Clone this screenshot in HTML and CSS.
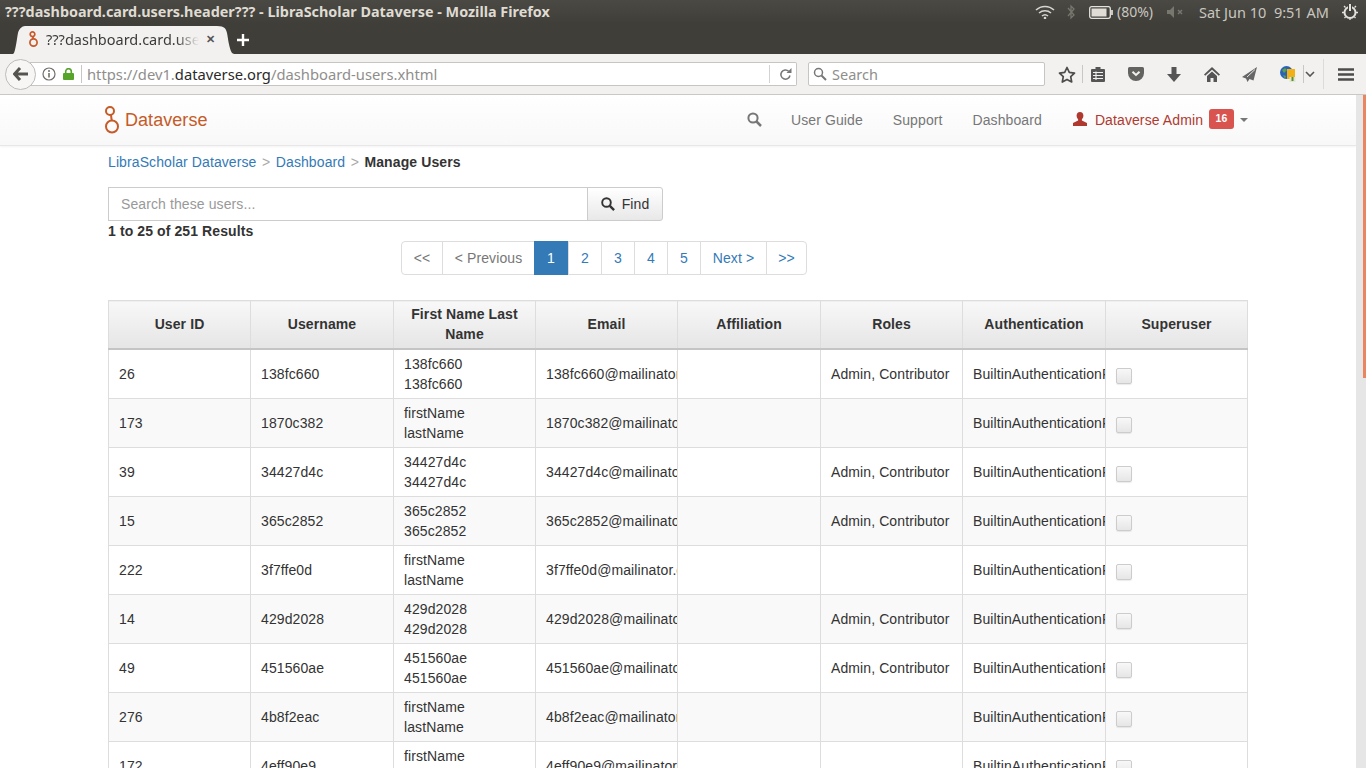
FILE: index.html
```html
<!DOCTYPE html>
<html lang="en">
<head>
<meta charset="utf-8">
<title>Manage Users</title>
<link rel="stylesheet" href="styles.css">
</head>
<body>
<div class="titlebar">
  <div class="wintitle">???dashboard.card.users.header??? - LibraScholar Dataverse - Mozilla Firefox</div>
  <div class="tray">
    <svg class="t-wifi" width="20" height="14" viewBox="0 0 20 14"><g fill="none" stroke="#d8d6cf" stroke-width="1.5"><path d="M1 5a13 13 0 0 1 18 0"/><path d="M4 8a9 9 0 0 1 12 0"/><path d="M7 11a4.500 4.500 0 0 1 6 0"/></g><circle cx="10" cy="13" r="1.300" fill="#d8d6cf"/></svg>
    <svg class="t-bt" width="8" height="16" viewBox="0 0 8 16"><path d="M1 4l6 7-3 3V2l3 3-6 7" fill="none" stroke="#77766f" stroke-width="1.300"/></svg>
    <svg class="t-bat" width="24" height="13" viewBox="0 0 24 13"><rect x=".7" y=".7" width="20.600" height="11.600" rx="2" fill="none" stroke="#e4e2dc" stroke-width="1.300"/><rect x="2.500" y="2.500" width="15" height="8" fill="#dfddd6"/><rect x="22" y="4" width="2" height="5" fill="#c9c7c0"/></svg>
    <span class="t-text t-pct">(80%)</span>
    <svg class="t-mute" width="17" height="12" viewBox="0 0 17 12"><path d="M0 4h3l4-4v12l-4-4H0z" fill="#77766f"/><path d="M11 4l4 4m0-4l-4 4" stroke="#77766f" stroke-width="1.500"/></svg>
    <span class="t-text t-date">Sat Jun 10&nbsp; 9:51 AM</span>
    <svg class="t-power" width="16" height="16" viewBox="0 0 16 16"><circle cx="8" cy="8.500" r="5.500" fill="none" stroke="#e4e2dc" stroke-width="2"/><path d="M8 0v8" stroke="#3f3e39" stroke-width="4"/><path d="M8 0v7" stroke="#e4e2dc" stroke-width="2"/><path d="M2 2l1.500 1.500M14 2l-1.500 1.500M0 8.500h2M14 8.500h2M8 15v1M2.500 14l1-1M13.500 14l-1-1" stroke="#e4e2dc" stroke-width="1.300"/></svg>
  </div>
</div>
<div class="tabstrip">
  <div class="tab">
    <svg class="tabicon" width="11" height="16" viewBox="0 0 11 16"><g fill="none" stroke="#c9592a" stroke-width="1.700"><circle cx="4.500" cy="3.200" r="2.300"/><circle cx="5.500" cy="11.500" r="3.600"/><path d="M4.800 5.500l.5 2.500"/></g></svg>
    <span class="tabtext">???dashboard.card.use</span>
    <span class="tabclose">✕</span>
  </div>
  <svg class="newtab" width="14" height="14" viewBox="0 0 14 14"><path d="M7 1v12M1 7h12" stroke="#fff" stroke-width="2.400"/></svg>
</div>
<div class="navrow">
  <div class="backbtn"><svg width="16" height="14" viewBox="0 0 16 14"><path d="M7 1L1.500 7 7 13M2 7h13" fill="none" stroke="#55544f" stroke-width="3"/></svg></div>
  <div class="urlbar">
    <svg class="u-info" width="14" height="14" viewBox="0 0 14 14"><circle cx="7" cy="7" r="6" fill="none" stroke="#6f6e6a" stroke-width="1.200"/><path d="M7 6v4.500" stroke="#6f6e6a" stroke-width="1.600"/><circle cx="7" cy="3.900" r="1" fill="#6f6e6a"/></svg>
    <svg class="u-lock" width="11" height="12" viewBox="0 0 11 12"><rect y="5" width="11" height="7" rx="1" fill="#57a42b"/><path d="M2.700 5.500V3.500a2.800 2.800 0 0 1 5.600 0v2" fill="none" stroke="#57a42b" stroke-width="1.600"/></svg>
    <span class="u-sep"></span>
    <span class="urltext">https://dev1.<b>dataverse.org</b>/dashboard-users.xhtml</span>
    <span class="u-sep2"></span>
    <svg class="u-reload" width="13" height="13" viewBox="0 0 13 13"><path d="M11 7.500a4.600 4.600 0 1 1-1.300-4.300" fill="none" stroke="#777" stroke-width="1.500"/><path d="M7.500 5h5V0z" fill="#777"/></svg>
  </div>
  <div class="searchbar">
    <svg width="14" height="14" viewBox="0 0 14 14"><circle cx="5.500" cy="5.500" r="4" fill="none" stroke="#777" stroke-width="1.500"/><path d="M8.500 8.500l4.500 4.500" stroke="#777" stroke-width="2"/></svg>
    <span>Search</span>
  </div>
  <svg class="i-star" width="18" height="17" viewBox="0 0 18 17"><path d="M9 1.500l2.300 4.900 5.200.7-3.800 3.600 1 5.300L9 13.400 4.300 16l1-5.300L1.500 7.100l5.200-.7z" fill="none" stroke="#4c4c4a" stroke-width="1.700" stroke-linejoin="round"/></svg>
  <span class="sep-a"></span>
  <svg class="i-clip" width="14" height="16" viewBox="0 0 14 16"><path d="M1 3h3.500V1h5v2H13a1 1 0 0 1 1 1v11a1 1 0 0 1-1 1H1a1 1 0 0 1-1-1V4a1 1 0 0 1 1-1z" fill="#555"/><path d="M2 6.500h10M2 9.500h10M2 12.500h10M5 5.500v8.500" stroke="#f2f1f0" stroke-width="1.100"/></svg>
  <svg class="i-pocket" width="16" height="14" viewBox="0 0 16 14"><path d="M1.500 0h13A1.500 1.500 0 0 1 16 1.500V6A8 8 0 0 1 0 6V1.500A1.500 1.500 0 0 1 1.500 0z" fill="#636360"/><path d="M4.500 4.800L8 8l3.500-3.200" fill="none" stroke="#f2f1f0" stroke-width="2"/></svg>
  <svg class="i-down" width="14" height="15" viewBox="0 0 14 15"><path d="M4.500 0h5v7H14l-7 8-7-8h4.500z" fill="#555"/></svg>
  <svg class="i-home" width="16" height="15" viewBox="0 0 16 15"><path d="M8 0l8 7.500-1.200 1.300L8 2.700 1.200 8.800 0 7.500z" fill="#555"/><path d="M3 9l5-4.500L13 9v6H9.500v-4h-3v4H3z" fill="#555"/></svg>
  <svg class="i-send" width="15" height="15" viewBox="0 0 15 15"><path d="M15 0L0 10l4 1.500L5.500 15l2-3 4 1.500z" fill="#666"/><path d="M13 2.500L5 10" stroke="#f2f1f0" stroke-width=".9"/></svg>
  <svg class="i-globe" width="16" height="16" viewBox="0 0 16 16"><circle cx="6.500" cy="6.500" r="6.500" fill="#2a62b8"/><path d="M2 4l3-2 2 2-3 3zM3 9l3 1-1 3z" fill="#5aa04a"/><rect x="7" y="3" width="8" height="10" fill="#f1b016"/><rect x="9.500" y="11" width="6" height="5" fill="#dfe7d3"/><path d="M12.500 11v4" stroke="#55912f" stroke-width="2"/></svg>
  <span class="sep-b"></span>
  <svg class="i-chev" width="10" height="6" viewBox="0 0 10 6"><path d="M1 1l4 4 4-4" fill="none" stroke="#555" stroke-width="1.600"/></svg>
  <span class="sep-c"></span>
  <svg class="i-menu" width="16" height="13" viewBox="0 0 16 13"><path d="M0 1.500h16M0 6.500h16M0 11.500h16" stroke="#4c4c4a" stroke-width="2.400"/></svg>
</div>
<div class="viewport">
  <div class="page">
    <nav class="navbar">
      <div class="container nav-inner">
        <svg class="logo" width="15" height="28" viewBox="0 0 15 28"><g fill="none" stroke="#c55b28" stroke-width="2"><circle cx="6" cy="5" r="4"/><circle cx="8" cy="20.500" r="6"/><path d="M7 9l.700 5.500"/></g></svg>
        <span class="brand">Dataverse</span>
        <svg class="nav-search" width="15" height="15" viewBox="0 0 15 15"><circle cx="6" cy="6" r="4.600" fill="none" stroke="#777" stroke-width="2"/><path d="M9.500 9.500l4.500 4.500" stroke="#777" stroke-width="2.500"/></svg>
        <a class="nav-link nl-guide">User Guide</a>
        <a class="nav-link nl-gap">Support</a>
        <a class="nav-link nl-gap">Dashboard</a>
        <svg class="nav-user" width="14" height="14" viewBox="0 0 14 14"><path d="M7 0c2.200 0 3.400 1.500 3.400 3.600 0 1.600-.7 3-1.500 3.700v1.300L14 11v3H0v-3l5.100-2.400V7.300C4.300 6.600 3.600 5.200 3.600 3.600 3.600 1.500 4.800 0 7 0z" fill="#b0392f"/></svg>
        <a class="nav-admin">Dataverse Admin</a>
        <span class="badge">16</span>
        <span class="caret"></span>
      </div>
    </nav>
    <div class="container">
      <div class="crumbs">
        <a>LibraScholar Dataverse</a><span class="gt">&gt;</span><a>Dashboard</a><span class="gt">&gt;</span><b>Manage Users</b>
      </div>
      <div class="searchgroup">
        <div class="searchinput">Search these users...</div>
        <div class="findbtn">
          <svg width="14" height="14" viewBox="0 0 14 14"><circle cx="5.500" cy="5.500" r="4.300" fill="none" stroke="#333" stroke-width="1.900"/><path d="M8.800 8.800l4.300 4.300" stroke="#333" stroke-width="2.400"/></svg>
          <span>Find</span>
        </div>
      </div>
      <div class="results">1 to 25 of 251 Results</div>
      <div class="pagerwrap">
        <ul class="pager">
          <li class="off w40">&lt;&lt;</li>
          <li class="off w92">&lt; Previous</li>
          <li class="cur w34">1</li>
          <li class="w33">2</li>
          <li class="w33">3</li>
          <li class="w33">4</li>
          <li class="w33">5</li>
          <li class="w66">Next &gt;</li>
          <li class="w40">&gt;&gt;</li>
        </ul>
      </div>
      <table class="users">
        <thead>
          <tr><th>User ID</th><th>Username</th><th>First Name Last Name</th><th>Email</th><th>Affiliation</th><th>Roles</th><th>Authentication</th><th>Superuser</th></tr>
        </thead>
        <tbody>
          <tr><td>26</td><td>138fc660</td><td>138fc660<br>138fc660</td><td class="nw">138fc660@mailinator.com</td><td></td><td>Admin, Contributor</td><td class="nw">BuiltinAuthenticationProvider</td><td><span class="check"></span></td></tr>
          <tr><td>173</td><td>1870c382</td><td>firstName<br>lastName</td><td class="nw">1870c382@mailinator.com</td><td></td><td></td><td class="nw">BuiltinAuthenticationProvider</td><td><span class="check"></span></td></tr>
          <tr><td>39</td><td>34427d4c</td><td>34427d4c<br>34427d4c</td><td class="nw">34427d4c@mailinator.com</td><td></td><td>Admin, Contributor</td><td class="nw">BuiltinAuthenticationProvider</td><td><span class="check"></span></td></tr>
          <tr><td>15</td><td>365c2852</td><td>365c2852<br>365c2852</td><td class="nw">365c2852@mailinator.com</td><td></td><td>Admin, Contributor</td><td class="nw">BuiltinAuthenticationProvider</td><td><span class="check"></span></td></tr>
          <tr><td>222</td><td>3f7ffe0d</td><td>firstName<br>lastName</td><td class="nw">3f7ffe0d@mailinator.com</td><td></td><td></td><td class="nw">BuiltinAuthenticationProvider</td><td><span class="check"></span></td></tr>
          <tr><td>14</td><td>429d2028</td><td>429d2028<br>429d2028</td><td class="nw">429d2028@mailinator.com</td><td></td><td>Admin, Contributor</td><td class="nw">BuiltinAuthenticationProvider</td><td><span class="check"></span></td></tr>
          <tr><td>49</td><td>451560ae</td><td>451560ae<br>451560ae</td><td class="nw">451560ae@mailinator.com</td><td></td><td>Admin, Contributor</td><td class="nw">BuiltinAuthenticationProvider</td><td><span class="check"></span></td></tr>
          <tr><td>276</td><td>4b8f2eac</td><td>firstName<br>lastName</td><td class="nw">4b8f2eac@mailinator.com</td><td></td><td></td><td class="nw">BuiltinAuthenticationProvider</td><td><span class="check"></span></td></tr>
          <tr><td>172</td><td>4eff90e9</td><td>firstName<br>lastName</td><td class="nw">4eff90e9@mailinator.com</td><td></td><td></td><td class="nw">BuiltinAuthenticationProvider</td><td><span class="check"></span></td></tr>
        </tbody>
      </table>
    </div>
  </div>
  <div class="scrolltrack"><div class="scrollthumb"></div></div>
</div>
</body>
</html>
```
FILE: styles.css
```css
* { box-sizing: border-box; }
html, body { margin: 0; height: 768px; overflow: hidden; }
body { width: 1366px; font: 14px/20px "Liberation Sans", Arial, sans-serif; color: #333; background: #fff; display: flex; flex-direction: column; }

/* desktop title bar */
.titlebar { height: 24px; flex: none; display: flex; align-items: center; padding-left: 5px; background: linear-gradient(#4a4943, #3f3e39); }
.wintitle { font: 700 14.400px/24px "Noto Sans", sans-serif; color: #dfdbd2; width: 1030px; white-space: nowrap; }
.tray { display: flex; align-items: center; height: 24px; }
.t-text { font: 14px/24px "Noto Sans", sans-serif; color: #c9c7c0; white-space: nowrap; }
.t-bt { margin-left: 12px; }
.t-bat { margin-left: 14px; }
.t-pct { margin-left: 4px; width: 38px; }
.t-mute { margin-left: 12px; }
.t-date { margin-left: 15px; width: 131px; font-size: 14.500px; }
.t-power { margin-left: 12px; }

/* tabs */
.tabstrip { height: 30px; flex: none; background: #3f3e39; display: flex; align-items: flex-end; padding-left: 13px; }
.tab { width: 221px; height: 28px; background: #f2f1f0; display: flex; align-items: center; padding: 0 0 2px 15px; clip-path: path("M0 28L1 27C3 22 4 12 5 7C6 3 9 0 12 0L204 0C212 0 213 3 214 7C215 12 216 22 219 27L221 28Z"); }
.tabtext { margin-left: 7px; width: 153px; overflow: hidden; white-space: nowrap; font: 14.500px/26px "Noto Sans", sans-serif; color: #3c3b37; -webkit-mask-image: linear-gradient(90deg, #000 85%, transparent); mask-image: linear-gradient(90deg, #000 85%, transparent); }
.tabclose { margin-left: 7px; font-size: 11px; font-weight: 700; color: #555; }
.newtab { margin: 0 0 7px 2px; }

/* firefox toolbar */
.navrow { height: 41px; flex: none; background: #f2f1f0; border-bottom: 1px solid #c9c8c6; display: flex; align-items: center; padding-left: 5px; }
.backbtn { width: 31px; height: 31px; border-radius: 50%; border: 1px solid #bdbcba; background: #f7f6f5; display: flex; align-items: center; justify-content: center; margin-right: -6px; position: relative; }
.urlbar { width: 767px; height: 24px; background: #fff; border: 1px solid #c6c5c3; border-left: 0; border-radius: 0 2px 2px 0; display: flex; align-items: center; padding-left: 12px; }
.u-lock { margin-left: 7px; }
.u-sep { width: 1px; height: 18px; background: #c8c7c5; margin-left: 7px; }
.urltext { margin-left: 5px; width: 682px; white-space: nowrap; font: 14.750px/22px "Noto Sans", sans-serif; color: #8f8e8c; }
.urltext b { font-weight: 400; color: #2a2a2a; }
.u-sep2 { width: 1px; height: 18px; background: #d4d3d1; }
.u-reload { margin-left: 9px; }
.searchbar { width: 237px; height: 24px; margin-left: 11px; background: #fff; border: 1px solid #c6c5c3; border-radius: 2px; display: flex; align-items: center; gap: 5px; padding-left: 4px; font: 14.500px/22px "Noto Sans", sans-serif; color: #8f8e8c; }
.i-star { margin-left: 13px; }
.sep-a { width: 1px; height: 18px; background: #c8c7c5; margin-left: 6px; }
.i-clip { margin-left: 8px; }
.i-pocket { margin-left: 23px; }
.i-down { margin-left: 23px; }
.i-home { margin-left: 23px; }
.i-send { margin-left: 22px; }
.i-globe { margin-left: 23px; }
.sep-b { width: 1px; height: 18px; background: #c8c7c5; margin-left: 7px; }
.i-chev { margin-left: 1px; }
.sep-c { width: 1px; height: 30px; background: #dcdbd9; margin-left: 8px; }
.i-menu { margin-left: 14px; }

/* web page */
.viewport { flex: 1; display: flex; overflow: hidden; min-height: 0; letter-spacing: .1px; }
.page { width: 1356px; flex: none; }
.scrolltrack { width: 10px; background: #e6e6e6; display: flex; justify-content: flex-end; }
.scrollthumb { width: 3px; height: 283px; background: #e9855f; }
.container { width: 1170px; margin: 0 auto; padding: 0 15px; }
.navbar { height: 51px; background: linear-gradient(#fff, #f8f8f8); border-bottom: 1px solid #e7e7e7; box-shadow: 0 1px 2px rgba(0,0,0,.05); }
.nav-inner { display: flex; align-items: center; height: 50px; }
.logo { margin-left: -4px; }
.brand { margin-left: 6px; font-size: 18px; letter-spacing: .05px; color: #c55b28; width: 622px; }
.nav-search { margin-top: -2px; }
.nav-link { color: #777; }
.nl-guide { margin-left: 29px; }
.nl-gap { margin-left: 30px; }
.nav-user { margin-left: 31px; margin-top: -2px; }
.nav-admin { margin-left: 8px; color: #b0392f; }
.badge { margin-left: 6px; width: 25px; height: 20px; margin-top: -3px; border-radius: 3px; background: #d9534f; color: #fff; font-size: 10.500px; font-weight: 700; line-height: 18px; text-align: center; }
.caret { margin-left: 6px; border-top: 4px solid #777; border-left: 4px solid transparent; border-right: 4px solid transparent; }
.crumbs { height: 41px; padding-top: 6px; color: #333; }
.crumbs a { color: #337ab7; }
.crumbs .gt { color: #aaa; margin: 0 5.500px; }
.searchgroup { display: flex; height: 34px; width: 555px; }
.searchinput { width: 480px; border: 1px solid #ccc; padding: 6px 12px; color: #999; background: #fff; }
.findbtn { width: 76px; margin-left: -1px; border: 1px solid #ccc; border-radius: 0 3px 3px 0; background: linear-gradient(#fff, #e8e8e8); display: flex; align-items: center; justify-content: center; gap: 7px; color: #333; }
.results { font-weight: 700; height: 20px; }
.pagerwrap { display: flex; height: 59px; padding-left: 293px; }
.pager { list-style: none; margin: 0; padding: 0; display: flex; height: 34px; border: 1px solid #ddd; border-radius: 4px; width: 406px; color: #337ab7; }
.pager li { border-left: 1px solid #ddd; text-align: center; line-height: 32px; margin: 0; }
.pager li:first-child { border-left: 0; }
.pager .off { color: #777; }
.pager .cur { background: #337ab7; color: #fff; border-left: 0; margin: -1px 0; line-height: 34px; }
.w40 { width: 40px; } .w92 { width: 92px; } .w34 { width: 34px; } .w33 { width: 33px; } .w66 { width: 66px; }
.users { width: 1139px; table-layout: fixed; border-collapse: collapse; border: 1px solid #ddd; }
.users th { height: 48px; padding: 3px 10px 4px; border: 1px solid #ddd; border-bottom: 2px solid #c4c4c4; background: linear-gradient(#f8f8f8, #e5e5e5); color: #333; font-weight: 700; text-align: center; width: 142px; }
.users th:nth-child(2), .users th:nth-child(5), .users th:nth-child(7) { width: 143px; }
.users td { height: 49px; padding: 4px 10px; border: 1px solid #ddd; overflow: hidden; color: #333; }
.users tbody tr:nth-child(even) td { background: #f9f9f9; }
.users .nw { white-space: nowrap; }
.check { display: block; width: 16px; height: 16px; margin-top: 3px; border: 1px solid #ccc; border-radius: 2px; background: linear-gradient(#f8f8f8, #e6e6e6); box-shadow: 0 1px 1px rgba(0,0,0,.08); }
```
